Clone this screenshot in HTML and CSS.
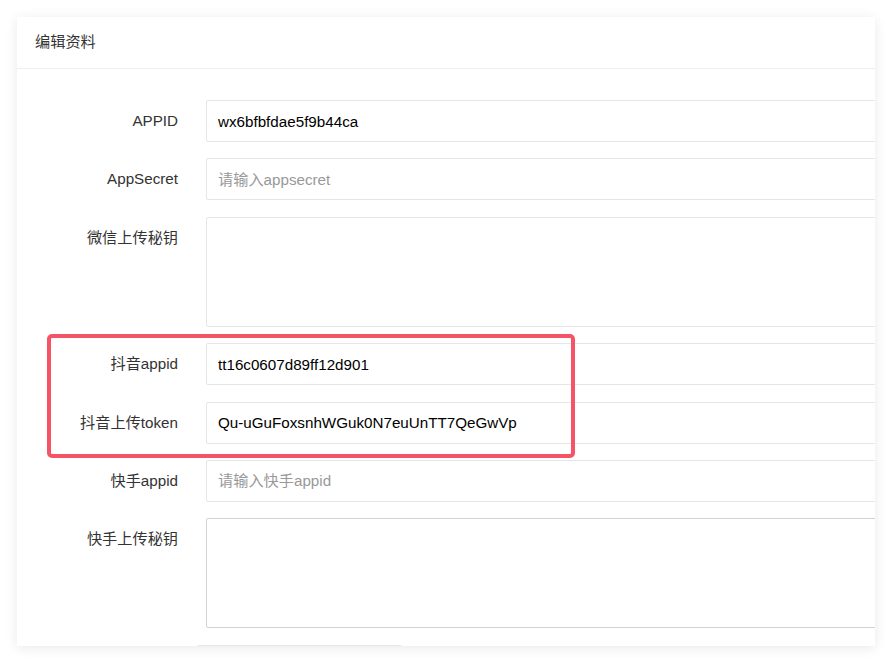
FILE: index.html
```html
<!DOCTYPE html>
<html lang="zh-CN">
<head>
<meta charset="utf-8">
<title>编辑资料</title>
<link rel="stylesheet" href="styles.css">
</head>
<body>
<div class="card">
  <div class="card-header">编辑资料</div>
  <div class="form">
    <div class="row">
      <label class="label">APPID</label>
      <div class="field"><input class="input" value="wx6bfbfdae5f9b44ca"></div>
    </div>
    <div class="row">
      <label class="label">AppSecret</label>
      <div class="field"><input class="input" placeholder="请输入appsecret"></div>
    </div>
    <div class="row">
      <label class="label">微信上传秘钥</label>
      <div class="field"><textarea class="textarea"></textarea></div>
    </div>
    <div class="row">
      <label class="label">抖音appid</label>
      <div class="field"><input class="input" value="tt16c0607d89ff12d901"></div>
    </div>
    <div class="row">
      <label class="label">抖音上传token</label>
      <div class="field"><input class="input" value="Qu-uGuFoxsnhWGuk0N7euUnTT7QeGwVp"></div>
    </div>
    <div class="row">
      <label class="label">快手appid</label>
      <div class="field"><input class="input" placeholder="请输入快手appid"></div>
    </div>
    <div class="row">
      <label class="label">快手上传秘钥</label>
      <div class="field"><textarea class="textarea textarea-hover"></textarea></div>
    </div>
    <div class="row row-last">
      <div class="label"></div>
      <div class="stub"></div>
    </div>
  </div>
</div>
<div class="highlight"></div>
</body>
</html>
```
FILE: styles.css
```css
html, body {
  margin: 0;
  padding: 0;
  background: #ffffff;
}
body {
  font-family: "Liberation Sans", Arial, "Noto Sans CJK SC", sans-serif;
  font-size: 15.2px;
  color: #333333;
  height: 664px;
  overflow: hidden;
}
.card {
  margin: 17px 0 0 17px;
  width: 858px;
  height: 629px;
  background: #ffffff;
  box-shadow: 0 2px 12px rgba(0, 0, 0, 0.09);
  overflow: hidden;
}
.card-header {
  height: 51px;
  line-height: 49px;
  padding-left: 18px;
  border-bottom: 1px solid #efefef;
  color: #333333;
  font-size: 15.2px;
}
.form {
  padding-top: 31px;
}
.row {
  display: flex;
  align-items: flex-start;
  margin-bottom: 16.4px;
}
.row-last {
  margin-bottom: 0;
  margin-top: 1.6px;
}
.label {
  width: 161px;
  flex: none;
  text-align: right;
  line-height: 42px;
  color: #333333;
  box-sizing: border-box;
}
.field {
  margin-left: 28px;
  flex: none;
  width: 800px;
}
.input,
.textarea {
  display: block;
  box-sizing: border-box;
  width: 800px;
  border: 1px solid #e6e6e6;
  border-radius: 2px;
  background: #ffffff;
  font-family: "Liberation Sans", Arial, "Noto Sans CJK SC", sans-serif;
  font-size: 15.2px;
  color: #000000;
  outline: none;
  margin: 0;
}
.input {
  height: 42px;
  padding: 0 11px;
}
.textarea {
  height: 110px;
  resize: none;
  padding: 8px 11px;
}
.textarea-hover {
  border-color: #d2d2d2;
}
.input::placeholder {
  color: #999999;
}
.stub {
  margin-left: 18px;
  width: 207px;
  height: 30px;
  box-sizing: border-box;
  border: 1px solid #e6e6e6;
  border-radius: 3px;
}
.highlight {
  position: absolute;
  left: 47px;
  top: 334px;
  width: 528px;
  height: 124px;
  box-sizing: border-box;
  border: 4px solid #f55366;
  border-radius: 5px;
  pointer-events: none;
}
```
